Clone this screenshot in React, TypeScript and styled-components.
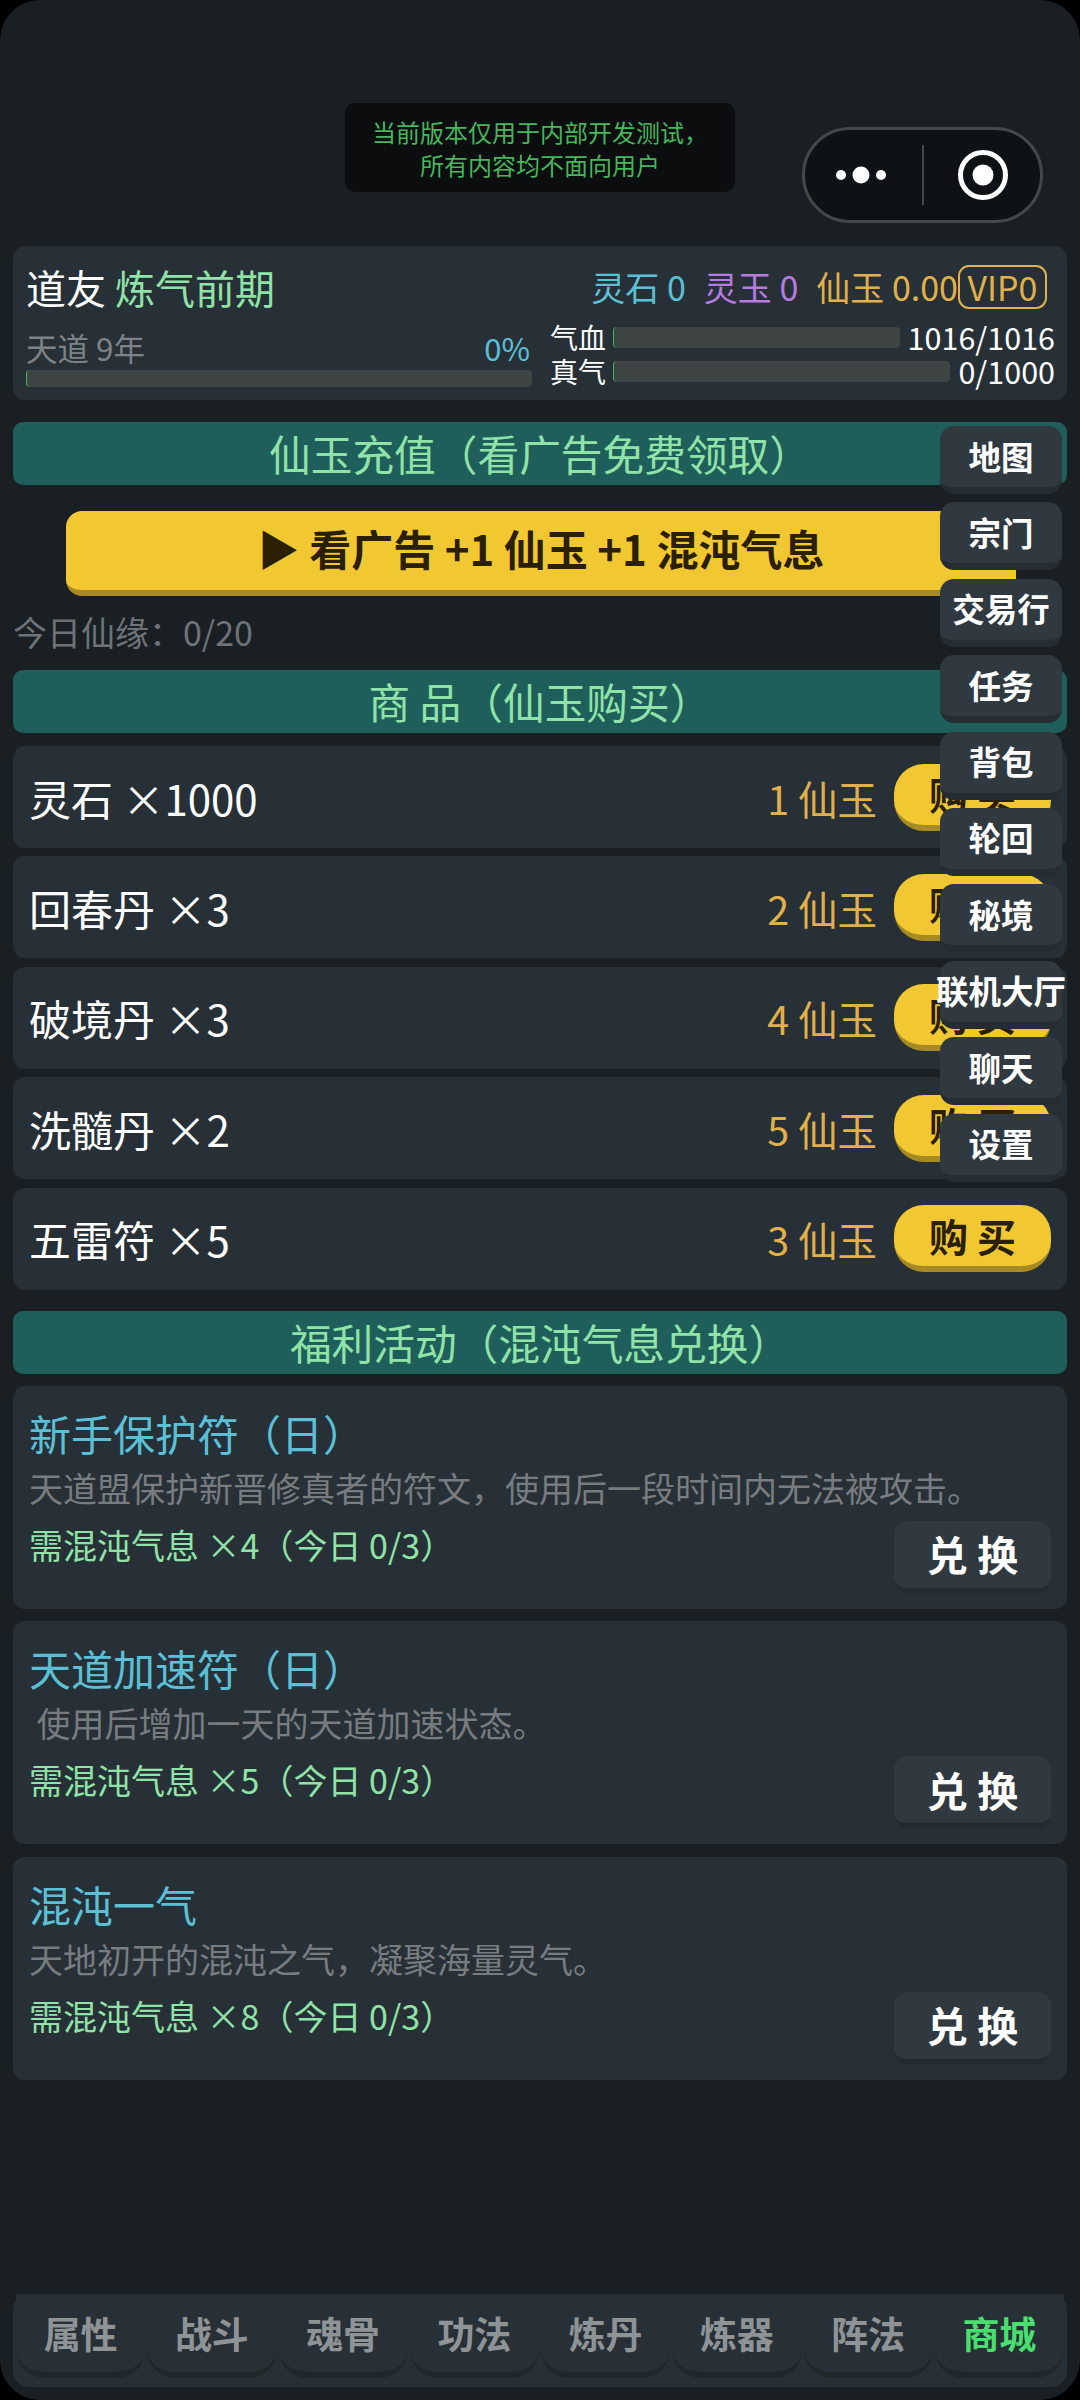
import React from "react";
import styled, { createGlobalStyle } from "styled-components";

const Global = createGlobalStyle`
  html, body { margin: 0; padding: 0; background: #000; }
  * { box-sizing: border-box; }
  body { font-family: "Noto Sans CJK SC", "Noto Sans", sans-serif; }
`;

const Page = styled.div`
  position: relative;
  width: 1080px;
  height: 2400px;
  background: #1a1f24;
  border-radius: 40px;
  overflow: hidden;
  display: flex;
  flex-direction: column;
  padding: 0 13px 13px;
`;
const TopBar = styled.div`
  height: 246px;
  flex: none;
  display: flex;
  align-items: flex-start;
  padding: 103px 24px 0 332px;
`;
const Toast = styled.div`
  width: 390px;
  height: 89px;
  background: #0b0d0f;
  border-radius: 10px;
  color: #46b65a;
  font-size: 24px;
  line-height: 33px;
  text-align: center;
  padding-top: 12px;
`;
const Capsule = styled.div`
  margin-left: auto;
  margin-top: 24px;
  width: 241px;
  height: 96px;
  border: 3px solid #44484c;
  border-radius: 48px;
  background: #0e1215;
  display: flex;
  align-items: center;
  justify-content: center;
  flex: none;
`;
const Glyph = styled.svg`
  display: block;
`;
const Header = styled.section`
  height: 154px;
  background: #273036;
  border-radius: 12px;
  padding: 0 12px 0 13px;
  flex: none;
`;
const HeadTop = styled.div`
  height: 76px;
  display: flex;
  align-items: center;
  justify-content: space-between;
  padding-top: 5px;
`;
const Who = styled.div`
  font-size: 40px;
  color: #fff;
  white-space: pre;
`;
const Realm = styled.span`
  color: #8fe3a6;
`;
const Funds = styled.div`
  display: flex;
  align-items: center;
  font-size: 34px;
  padding-right: 8px;
`;
const Fund = styled.span<{ $color: string }>`
  color: ${(p) => p.$color};
  margin-right: ${(p) => (p.$color === "#e2b04a" ? 0 : 18)}px;
  white-space: pre;
`;
const Vip = styled.span`
  height: 44px;
  width: 89px;
  border: 2px solid #e2b04a;
  border-radius: 11px;
  color: #e2b04a;
  display: flex;
  align-items: center;
  justify-content: center;
`;
const HeadBottom = styled.div`
  display: flex;
  gap: 18px;
`;
const Cultivate = styled.div`
  width: 506px;
  flex: none;
`;
const CultRow = styled.div`
  display: flex;
  justify-content: space-between;
  align-items: center;
  height: 44px;
  margin-top: 3px;
  margin-bottom: 1px;
  font-size: 31.5px;
  padding-right: 2px;
`;
const Year = styled.span`
  color: #7d8286;
`;
const Pct = styled.span`
  color: #5bc0d6;
  font-size: 31px;
`;
const Track = styled.div<{ $h: number }>`
  height: ${(p) => p.$h}px;
  flex: 1;
  background: #3f4445;
  border-radius: 4px;
  border-left: 1.5px solid #3fb950;
`;
const Stats = styled.div`
  flex: 1;
  display: flex;
  flex-direction: column;
  margin-top: -2px;
`;
const StatRow = styled.div`
  height: 34px;
  display: flex;
  align-items: center;
  gap: 8px;
  color: #fff;
`;
const StatLabel = styled.span`
  font-size: 28px;
  width: 55px;
  flex: none;
  white-space: nowrap;
`;
const StatValue = styled.span`
  font-size: 30.5px;
  white-space: nowrap;
`;
const SectionTitle = styled.h2<{ $top: number }>`
  margin: ${(p) => p.$top}px 0 0;
  height: 63px;
  flex: none;
  background: #1f5f5b;
  border-radius: 10px;
  color: #8fe3a6;
  font-size: 41.7px;
  font-weight: 400;
  line-height: 62px;
  text-align: center;
`;
const AdButton = styled.button`
  display: block;
  flex: none;
  width: 950px;
  height: 85px;
  margin: 26px 0 0 53px;
  padding: 0 0 6px;
  border: 0;
  border-bottom: 6px solid #a88a24;
  border-radius: 16px;
  background: #f1c832;
  color: #2a2000;
  font: 700 42px "Noto Sans CJK SC", sans-serif;
`;
const Quota = styled.div`
  flex: none;
  height: 74px;
  padding-top: 11px;
  color: #6e7377;
  font-size: 34px;
  line-height: 50px;
`;
const Goods = styled.div`
  display: flex;
  flex-direction: column;
  gap: 8.4px;
  margin-top: 13px;
  flex: none;
`;
const GoodRow = styled.div`
  height: 102px;
  background: #273036;
  border-radius: 12px;
  display: flex;
  align-items: center;
  padding: 0 16px;
`;
const GoodName = styled.span`
  flex: 1;
  color: #fff;
  font-size: 42px;
`;
const Price = styled.span`
  color: #e2b04a;
  font-size: 39.5px;
  margin-right: 17px;
  white-space: pre;
`;
const BuyButton = styled.button`
  width: 157px;
  height: 67px;
  border: 0;
  border-bottom: 6px solid #a88a24;
  border-radius: 30px;
  background: #f1c832;
  color: #2a2000;
  padding: 0 0 2px;
  font: 700 39px "Noto Sans CJK SC", sans-serif;
  white-space: pre;
`;
const Perks = styled.div`
  display: flex;
  flex-direction: column;
  gap: 12.5px;
  margin-top: 12px;
  flex: none;
`;
const PerkCard = styled.article`
  height: 223px;
  background: #273036;
  border-radius: 12px;
  padding: 17px 16px 0;
  position: relative;
`;
const PerkTitle = styled.div`
  color: #5bc0d6;
  font-size: 42px;
  line-height: 60px;
`;
const PerkDesc = styled.div`
  color: #777c80;
  font-size: 34px;
  line-height: 50px;
  white-space: pre;
`;
const PerkFoot = styled.div`
  display: flex;
  justify-content: space-between;
  align-items: flex-start;
`;
const PerkCost = styled.div`
  color: #8fe3a6;
  font-size: 34px;
  line-height: 50px;
  margin-top: 7px;
`;
const SwapButton = styled.button`
  width: 157px;
  height: 72px;
  margin-top: 8px;
  border: 0;
  border-bottom: 5px solid #242b30;
  border-radius: 14px;
  background: #30393f;
  color: #fff;
  padding: 0 0 2px;
  font: 700 41px "Noto Sans CJK SC", sans-serif;
  white-space: pre;
`;
const Spacer = styled.div`
  flex: 1;
`;
const TabBar = styled.nav`
  flex: none;
  height: 93px;
  background: #273036;
  border-radius: 16px;
  display: flex;
  gap: 2px;
  padding: 0 3px;
`;
const Tab = styled.div<{ $active?: boolean }>`
  flex: 1;
  height: 84px;
  background: #273036;
  border-bottom: 6px solid #20272b;
  border-radius: 0 0 28px 28px;
  display: flex;
  align-items: center;
  justify-content: center;
  color: ${(p) => (p.$active ? "#4ade6f" : "#8e9396")};
  font-size: 37px;
  font-weight: 700;
`;
const SideMenu = styled.nav`
  position: absolute;
  left: 940px;
  top: 426px;
  width: 122px;
  display: flex;
  flex-direction: column;
  gap: 8.4px;
`;
const SideItem = styled.div`
  height: 68px;
  background: #30393f;
  border-bottom: 7px solid #262d32;
  border-radius: 14px;
  display: flex;
  align-items: center;
  justify-content: center;
  padding-bottom: 3px;
  color: #fff;
  font-size: 32.5px;
  font-weight: 700;
  white-space: nowrap;
`;

const goods = [
  ["灵石 ×1000", "1 仙玉"],
  ["回春丹 ×3", "2 仙玉"],
  ["破境丹 ×3", "4 仙玉"],
  ["洗髓丹 ×2", "5 仙玉"],
  ["五雷符 ×5", "3 仙玉"],
];
const perks = [
  ["新手保护符（日）", "天道盟保护新晋修真者的符文，使用后一段时间内无法被攻击。", "需混沌气息 ×4（今日 0/3）"],
  ["天道加速符（日）", " 使用后增加一天的天道加速状态。", "需混沌气息 ×5（今日 0/3）"],
  ["混沌一气", "天地初开的混沌之气，凝聚海量灵气。", "需混沌气息 ×8（今日 0/3）"],
];
const tabs = ["属性", "战斗", "魂骨", "功法", "炼丹", "炼器", "阵法", "商城"];
const side = ["地图", "宗门", "交易行", "任务", "背包", "轮回", "秘境", "联机大厅", "聊天", "设置"];

export default function App() {
  return (
    <Page>
      <Global />
      <TopBar>
        <Toast>
          当前版本仅用于内部开发测试，
          <br />
          所有内容均不面向用户
        </Toast>
        <Capsule>
          <Glyph width="235" height="90" viewBox="0 0 235 90">
            <circle cx="36" cy="45" r="5" fill="#fff" />
            <circle cx="56" cy="45" r="8.5" fill="#fff" />
            <circle cx="76" cy="45" r="5" fill="#fff" />
            <rect x="117" y="15" width="2" height="60" fill="#44484c" />
            <circle cx="178" cy="45" r="22.5" fill="none" stroke="#fff" strokeWidth="5" />
            <circle cx="178" cy="45" r="10.5" fill="#fff" />
          </Glyph>
        </Capsule>
      </TopBar>
      <Header>
        <HeadTop>
          <Who>
            道友 <Realm>炼气前期</Realm>
          </Who>
          <Funds>
            <Fund $color="#5bc0d6">灵石 0</Fund>
            <Fund $color="#b57be0">灵玉 0</Fund>
            <Fund $color="#e2b04a">仙玉 0.00</Fund>
            <Vip>VIP0</Vip>
          </Funds>
        </HeadTop>
        <HeadBottom>
          <Cultivate>
            <CultRow>
              <Year>天道 9年</Year>
              <Pct>0%</Pct>
            </CultRow>
            <Track $h={17} />
          </Cultivate>
          <Stats>
            <StatRow>
              <StatLabel>气血</StatLabel>
              <Track $h={21} />
              <StatValue>1016/1016</StatValue>
            </StatRow>
            <StatRow>
              <StatLabel>真气</StatLabel>
              <Track $h={21} />
              <StatValue>0/1000</StatValue>
            </StatRow>
          </Stats>
        </HeadBottom>
      </Header>
      <SectionTitle $top={22}>仙玉充值（看广告免费领取）</SectionTitle>
      <AdButton>▶ 看广告 +1 仙玉 +1 混沌气息</AdButton>
      <Quota>今日仙缘：0/20</Quota>
      <SectionTitle $top={0}>商 品（仙玉购买）</SectionTitle>
      <Goods>
        {goods.map(([name, price]) => (
          <GoodRow key={name}>
            <GoodName>{name}</GoodName>
            <Price>{price}</Price>
            <BuyButton>购 买</BuyButton>
          </GoodRow>
        ))}
      </Goods>
      <SectionTitle $top={21}>福利活动（混沌气息兑换）</SectionTitle>
      <Perks>
        {perks.map(([title, desc, cost]) => (
          <PerkCard key={title}>
            <PerkTitle>{title}</PerkTitle>
            <PerkDesc>{desc}</PerkDesc>
            <PerkFoot>
              <PerkCost>{cost}</PerkCost>
              <SwapButton>兑 换</SwapButton>
            </PerkFoot>
          </PerkCard>
        ))}
      </Perks>
      <Spacer />
      <TabBar>
        {tabs.map((t) => (
          <Tab key={t} $active={t === "商城"}>
            {t}
          </Tab>
        ))}
      </TabBar>
      <SideMenu>
        {side.map((s) => (
          <SideItem key={s}>{s}</SideItem>
        ))}
      </SideMenu>
    </Page>
  );
}
